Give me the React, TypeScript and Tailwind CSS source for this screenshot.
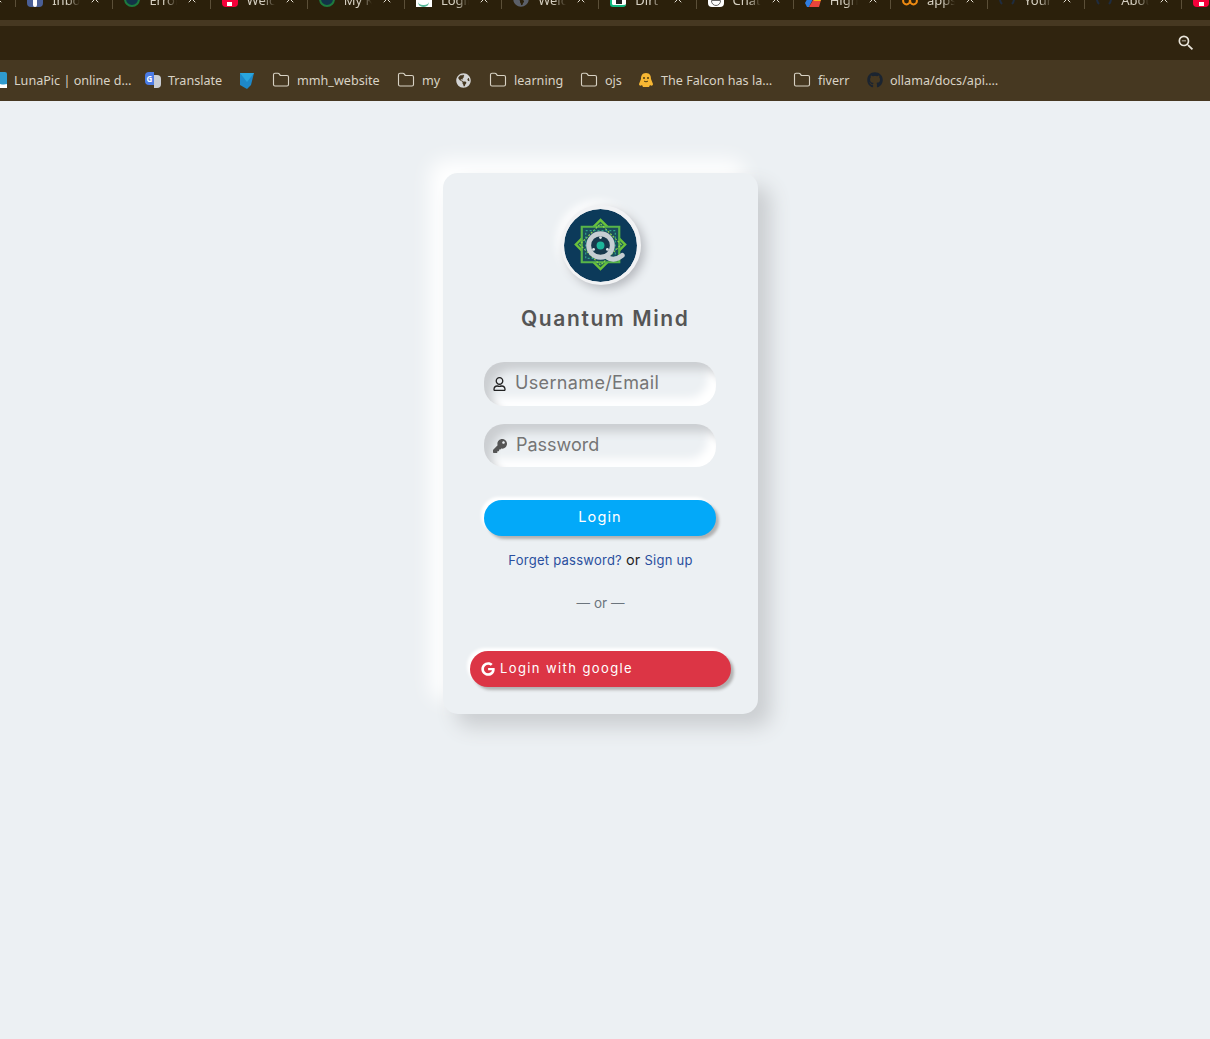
import React from 'react';
import { Folder, X } from 'lucide-react';
import { FaGithub, FaGlobeAmericas, FaGoogle, FaKey, FaRegUser } from 'react-icons/fa';
import { MdZoomOut } from 'react-icons/md';

const TabIcon: React.FC<{ kind: string }> = ({ kind }) => {
  if (kind === 'mail') {
    return <div className="w-4 h-4 rounded-sm bg-[#4a5f96] flex justify-center"><div className="w-1 h-3 mt-1 bg-white rounded-sm" /></div>;
  }
  if (kind === 'green') {
    return <div className="w-4 h-4 rounded-full border-2 border-[#1d7a3e] bg-[#123247]" />;
  }
  if (kind === 'yt') {
    return (
      <div className="w-4 h-4 rounded-[4px] bg-[#f5003a] flex items-end justify-center pb-[1px]">
        <div className="w-[5px] h-[4px] bg-white" />
      </div>
    );
  }
  if (kind === 'login') {
    return <div className="w-4 h-4 bg-white flex items-end justify-center"><div className="w-[11px] h-[5px] rounded-b-full border-b-2 border-[#57b99a]" /></div>;
  }
  if (kind === 'wp') {
    return <FaGlobeAmericas className="w-4 h-4 text-[#5b5f68]" />;
  }
  if (kind === 'dirt') {
    return <div className="w-4 h-4 rounded-[3px] bg-white border-l-2 border-b-2 border-[#0fb77f] flex items-end justify-center pb-[1px]"><div className="w-[6px] h-[5px] bg-[#222]" /></div>;
  }
  if (kind === 'chat') {
    return <div className="w-4 h-4 rounded-[4px] bg-white flex items-end justify-center pb-[1px]"><div className="w-[10px] h-[6px] rounded-b-full border border-[#666]" /></div>;
  }
  if (kind === 'drive') {
    return (
      <svg viewBox="0 0 16 16" className="w-4 h-4">
        <path d="M0 12 L5 3 L8 8 L4 16 L2 16 Z" fill="#2f7de1" />
        <path d="M4 16 L8 9 L16 9 L14 16 Z" fill="#e8453c" />
        <path d="M5 2 L11 2 L16 10 L9 10 Z" fill="#f5b916" />
      </svg>
    );
  }
  if (kind === 'apps') {
    return (
      <svg viewBox="0 0 16 16" className="w-4 h-4" fill="none" stroke="#ee8a12" strokeWidth="2">
        <circle cx="4.5" cy="10" r="3.4" />
        <circle cx="11.5" cy="10" r="3.4" />
      </svg>
    );
  }
  return <div className="w-4 h-4 rounded-full border-2 border-[#1f2c3f] border-t-transparent border-b-transparent" />;
};

const tabs = [
  { title: '', icon: 'none' },
  { title: 'Inbox', icon: 'mail' },
  { title: 'Error', icon: 'green' },
  { title: 'Welc', icon: 'yt' },
  { title: 'My K', icon: 'green' },
  { title: 'Login', icon: 'login' },
  { title: 'Welc', icon: 'wp' },
  { title: 'Dirt', icon: 'dirt' },
  { title: 'Chat', icon: 'chat' },
  { title: 'High', icon: 'drive' },
  { title: 'apps', icon: 'apps' },
  { title: 'Your', icon: 'gh' },
  { title: 'Abou', icon: 'gh' },
];

const Bookmark: React.FC<{ label: string; icon: React.ReactNode; className: string }> = ({ label, icon, className }) => (
  <div className={`flex items-center gap-[7px] whitespace-nowrap ${className}`}>
    {icon}
    {label && <span className="translate-y-[1px]">{label}</span>}
  </div>
);

const folder = <Folder className="w-[18px] h-[18px] text-[#d8d2c4]" strokeWidth={1.5} />;

const Logo: React.FC = () => (
  <svg viewBox="0 0 74 74" className="w-[73px] h-[73px] rounded-full">
    <circle cx="37" cy="37" r="37" fill="#0c3a5a" />
    <path d="M37 11 L62 36 L37 61 L12 36 Z" fill="#1c5a5c" stroke="#6cc23a" strokeWidth="2.4" />
    <path d="M18 18 H56 V54 H18 Z" fill="#1a4d5c" stroke="#58b548" strokeWidth="2.2" />
    <path d="M37 15 L58 36 L37 57 L16 36 Z" fill="none" stroke="#8fd14f" strokeWidth="1.2" strokeDasharray="2 1.5" />
    <path d="M22 22 H52 V50 H22 Z" fill="none" stroke="#2fa38a" strokeWidth="1.2" strokeDasharray="2 2" />
    <circle cx="37" cy="37" r="12" fill="#17384c" stroke="#c6ced3" strokeWidth="5" />
    <path d="M43 48 C47 52 53 52 59 47" fill="none" stroke="#c6ced3" strokeWidth="5" strokeLinecap="round" />
    <circle cx="37" cy="37" r="4" fill="#1cb59a" />
    <circle cx="37" cy="29" r="1.4" fill="#dfe5e8" />
    <circle cx="30" cy="41" r="1.4" fill="#dfe5e8" />
    <circle cx="44" cy="41" r="1.4" fill="#dfe5e8" />
  </svg>
);

const App: React.FC = () => {
  return (
    <div className="min-h-screen bg-[#ecf0f3] font-['Inter',sans-serif] overflow-hidden">
      <div className="h-5 bg-[#2b200b] overflow-hidden">
        <div className="flex items-center h-4 -mt-[9px] -ml-[81px] font-['Noto_Sans',sans-serif] text-[13px] text-[#d6d0c2]">
          {tabs.map((tab, i) => (
            <div key={i} className="w-[97.2px] shrink-0 flex items-center pl-[11px] border-r border-[#5b4f38]">
              {tab.icon === 'none' ? <div className="w-4 h-4" /> : <TabIcon kind={tab.icon} />}
              <span className="w-[28px] ml-[9px] translate-y-[2px] overflow-hidden whitespace-nowrap [mask-image:linear-gradient(to_right,black_55%,transparent)]">{tab.title}</span>
              <X className="w-3 h-3 ml-[9px] text-[#e4dfd3]" strokeWidth={2} />
            </div>
          ))}
          <div className="shrink-0 pl-[11px]"><TabIcon kind="yt" /></div>
        </div>
      </div>
      <div className="h-[6px] bg-[#463821]" />
      <div className="h-[34px] bg-[#30240f] flex items-center justify-end pr-[14px]">
        <MdZoomOut className="w-5 h-5 text-[#e8e4da]" />
      </div>
      <div className="h-[41px] bg-[#463821] flex items-center font-['Noto_Sans',sans-serif] text-[12.6px] text-[#d9d3c5] overflow-hidden">
        <Bookmark className="-ml-[9px] w-[154px]" label="LunaPic | online d…" icon={
          <svg viewBox="0 0 16 16" className="w-4 h-4 shrink-0"><rect width="16" height="16" rx="2" fill="#2f9bd0" /><path d="M0 11 C5 9 10 14 16 12 V16 H0 Z" fill="#ffffff" /></svg>
        } />
        <Bookmark className="w-[94px]" label="Translate" icon={
          <div className="w-4 h-4 shrink-0 flex">
            <div className="w-[9px] h-[13px] bg-[#4b7be5] rounded-l-sm text-white text-[8px] font-bold flex items-center justify-center">G</div>
            <div className="w-[7px] h-[13px] mt-[3px] bg-[#c9cdd4] rounded-r-sm" />
          </div>
        } />
        <Bookmark className="w-[33px]" label="" icon={
          <svg viewBox="0 0 16 16" className="w-4 h-4"><path d="M1 0 H15 L12 12 L8 16 L1 12 Z" fill="#1e88c9" /><path d="M1 0 L15 0 L8 9 Z" fill="#29a5de" /></svg>
        } />
        <Bookmark className="w-[125px]" label="mmh_website" icon={folder} />
        <Bookmark className="w-[59px]" label="my" icon={folder} />
        <Bookmark className="w-[33px]" label="" icon={<FaGlobeAmericas className="w-[15px] h-[15px] text-[#d4d4d4]" />} />
        <Bookmark className="w-[91px]" label="learning" icon={folder} />
        <Bookmark className="w-[58px]" label="ojs" icon={folder} />
        <Bookmark className="w-[155px]" label="The Falcon has la…" icon={
          <svg viewBox="0 0 16 16" className="w-4 h-4 shrink-0">
            <path d="M8 1 C12 1 13 4 13 7 L15 12 C15 14 13 14 12 13 L11 15 H5 L4 13 C3 14 1 14 1 12 L3 7 C3 4 4 1 8 1 Z" fill="#f7b733" />
            <circle cx="6" cy="6" r="1" fill="#4a3a12" />
            <circle cx="10" cy="6" r="1" fill="#4a3a12" />
            <path d="M6 9 C7 10 9 10 10 9" stroke="#4a3a12" strokeWidth="1" fill="none" />
          </svg>
        } />
        <Bookmark className="w-[74px]" label="fiverr" icon={folder} />
        <Bookmark className="" label="ollama/docs/api.…" icon={<FaGithub className="w-4 h-4 text-[#1b2430]" />} />
      </div>

      <main className="pl-[443px] pt-[72px] pb-10">
        <div className="w-[315px] flex flex-col rounded-[15px] bg-[#ecf0f3] pt-[32px] pb-[27px] shadow-[13px_13px_20px_#cbced1,-13px_-13px_20px_#ffffff]">
          <div className="self-center w-20 h-20 rounded-full bg-[#f1f2f4] flex items-center justify-center shadow-[4px_4px_10px_#b8bbc0,-4px_-4px_10px_#ffffff]">
            <Logo />
          </div>
          <h1 className="mt-[20px] -mb-[1px] ml-[78px] text-[21px] leading-7 font-semibold tracking-[1.6px] text-[#555555] whitespace-nowrap">Quantum Mind</h1>

          <div className="mt-[30px] mx-[41px] w-[232px] h-11 rounded-[20px] flex items-center pl-[9px] shadow-[inset_8px_8px_8px_#cbced1,inset_-8px_-8px_8px_#ffffff]">
            <FaRegUser className="w-[13px] h-[14px] shrink-0 text-[#222222]" />
            <input placeholder="Username/Email" className="ml-[9px] mb-[3px] w-[190px] bg-transparent outline-none text-[18px] tracking-[0.35px] placeholder:text-[#757575]" />
          </div>
          <div className="mt-[18px] mx-[41px] w-[232px] h-[43px] rounded-[20px] flex items-center pl-[9px] shadow-[inset_8px_8px_8px_#cbced1,inset_-8px_-8px_8px_#ffffff]">
            <FaKey className="w-[14px] h-[14px] shrink-0 text-[#555555]" />
            <input type="password" placeholder="Password" className="ml-[9px] mb-[3px] w-[190px] bg-transparent outline-none text-[18px] placeholder:text-[#757575]" />
          </div>

          <button className="mt-[33px] mx-[41px] w-[232px] h-9 pb-[3px] rounded-[30px] bg-[#03a9f9] text-white text-[14.5px] tracking-[1.1px] shadow-[3px_3px_3px_#b1b1b1,-3px_-3px_3px_#ffffff]">Login</button>

          <p className="mt-[14px] h-5 text-center text-[13px] leading-5 tracking-[0.25px] text-[#1f1f1f] whitespace-nowrap">
            <a className="text-[#2a4f9e]">Forget password?</a> <span className="text-[14.5px]">or</span> <a className="text-[#2a4f9e]">Sign up</a>
          </p>
          <p className="mt-[23px] h-5 text-center text-[13.5px] leading-5 text-[#6c757d]">— or —</p>

          <button className="mt-[38px] mx-[27px] w-[261px] h-9 rounded-[30px] bg-[#dc3545] text-white text-[13px] tracking-[1.4px] flex items-center pl-[11px] gap-[5px] shadow-[3px_3px_3px_#b1b1b1,-3px_-3px_3px_#ffffff]">
            <FaGoogle className="w-[14px] h-[14px] mb-[1px]" />
            Login with google
          </button>
        </div>
      </main>
    </div>
  );
};

export default App;
